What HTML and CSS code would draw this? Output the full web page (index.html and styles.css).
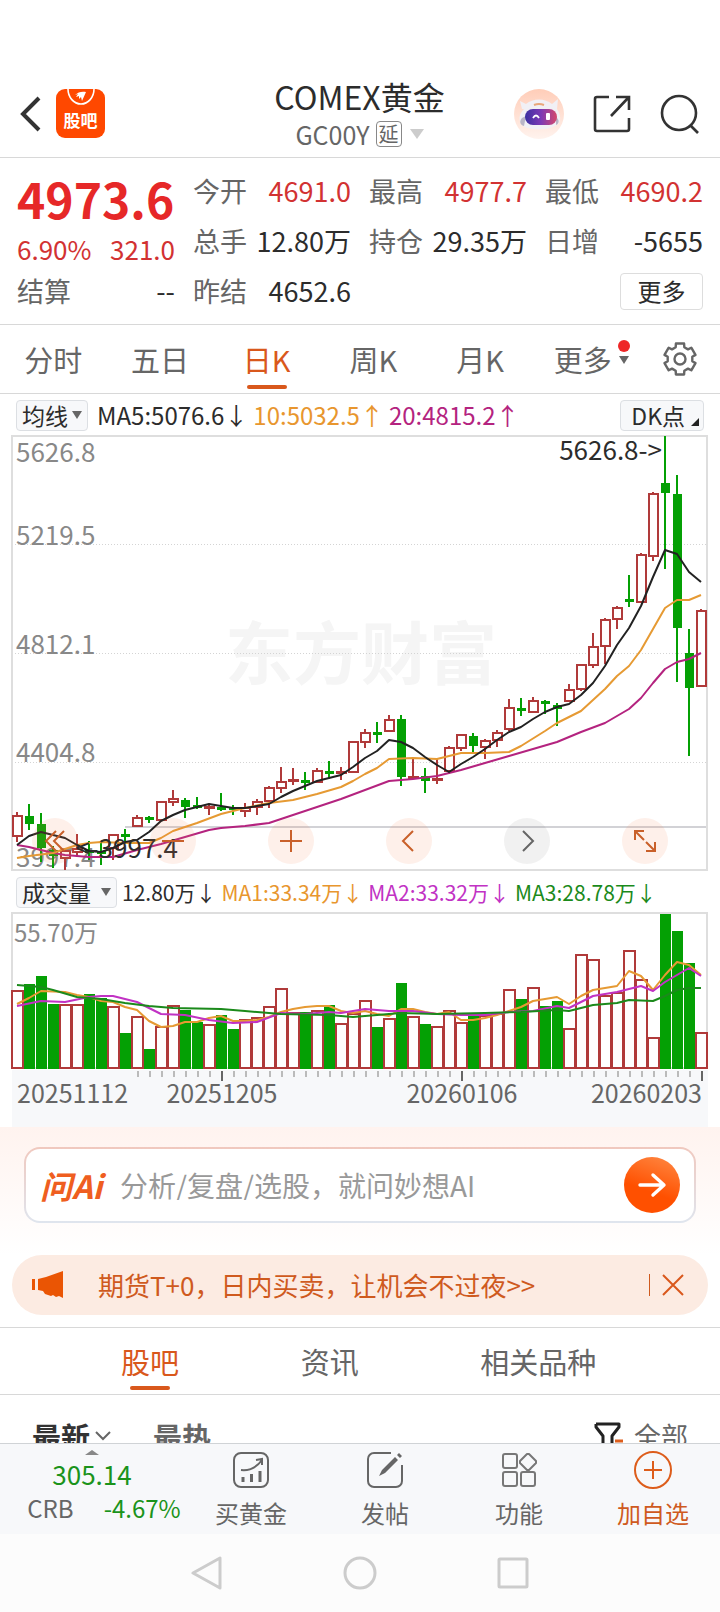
FILE: index.html
```html
<!DOCTYPE html>
<html lang="zh-CN">
<head>
    <meta charset="UTF-8" />
    <meta name="viewport" content="width=device-width, initial-scale=1" />
    <title>COMEX黄金</title>
    <link rel="stylesheet" href="styles.css">
</head>
<body>
<header class="header">
    <div class="header-left">
        <button class="icon-btn" aria-label="返回">
            <svg width="24" height="38" viewBox="0 0 24 38"><path d="M20 3 4 19l16 16" fill="none" stroke="#333" stroke-width="4"/></svg>
        </button>
        <a class="guba" href="#guba">
            <svg width="28" height="17" viewBox="0 0 28 17"><path d="M1 0a13 15 0 0 0 26 0" fill="none" stroke="#fff" stroke-width="1.6"/><path d="M8 6c3-3 7-4 11-3l-4 9-1-4-2 2 0-3-3 1 2-3z" fill="#fff"/></svg>
            <span>股吧</span>
        </a>
    </div>
    <div class="title">
        <h1>COMEX黄金</h1>
        <button class="code">GC00Y<span class="delay">延</span><i class="tri"></i></button>
    </div>
    <div class="header-right">
        <button class="icon-btn" aria-label="智能助手">
            <svg width="50" height="50" viewBox="0 0 50 50">
                <defs>
                    <linearGradient id="face" x1="0" x2="0" y1="0" y2="1"><stop offset="0" stop-color="#ffcdb8"/><stop offset="1" stop-color="#fff3ee"/></linearGradient>
                    <linearGradient id="visor"><stop offset="0" stop-color="#3b2fa0"/><stop offset=".5" stop-color="#7c3ab5"/><stop offset="1" stop-color="#d5486c"/></linearGradient>
                </defs>
                <circle cx="25" cy="25" r="25" fill="url(#face)"/>
                <path d="M8 20 6 12l6 3c7-6 19-6 26 0l6-5-1 10c4 6 4 12 1 15-8 7-29 7-36 1-4-5-3-11 2-16z" fill="#f1f0f5"/>
                <path d="M8 29c-3 3-2 7 2 8l2-10zM42 28c4 3 3 7 0 8z" fill="#b9b5c6"/>
                <rect x="11" y="20" width="32" height="16" rx="8" fill="url(#visor)"/>
                <path d="M19 29q3-5 6 0" fill="none" stroke="#fff" stroke-width="1.8"/>
                <rect x="32" y="24" width="4" height="7" rx="1" fill="#fff"/>
                <path d="M20 16q5-2 10 0" fill="none" stroke="#e9a77a" stroke-width="2"/>
            </svg>
        </button>
        <button class="icon-btn" aria-label="分享">
            <svg width="40" height="40" viewBox="0 0 40 40" fill="none" stroke="#333" stroke-width="2.6"><path d="M17 3H5a2 2 0 0 0-2 2v30a2 2 0 0 0 2 2h30a2 2 0 0 0 2-2V24M24 3h13v13M36 4 19 22"/></svg>
        </button>
        <button class="icon-btn" aria-label="搜索">
            <svg width="40" height="40" viewBox="0 0 40 40" fill="none" stroke="#333" stroke-width="2.6"><circle cx="19" cy="19" r="17"/><path d="m30 31 8 8"/></svg>
        </button>
    </div>
</header>

<section class="quote">
    <div class="last">4973.6</div>
    <div class="cell"><span>今开</span><b class="up">4691.0</b></div>
    <div class="cell"><span>最高</span><b class="up">4977.7</b></div>
    <div class="cell"><span>最低</span><b class="up">4690.2</b></div>
    <div class="cell change"><b class="up">6.90%</b><b class="up">321.0</b></div>
    <div class="cell"><span>总手</span><b>12.80万</b></div>
    <div class="cell"><span>持仓</span><b>29.35万</b></div>
    <div class="cell"><span>日增</span><b>-5655</b></div>
    <div class="cell"><span>结算</span><b>--</b></div>
    <div class="cell"><span>昨结</span><b>4652.6</b></div>
    <button class="more">更多</button>
</section>

<nav class="periods">
    <button>分时</button>
    <button>五日</button>
    <button class="active">日K</button>
    <button>周K</button>
    <button>月K</button>
    <button class="more-tab">更多<span class="mark"><i class="dot"></i><i class="tri"></i></span></button>
    <button aria-label="设置">
        <svg width="36" height="36" viewBox="0 0 36 36" fill="none" stroke="#666" stroke-width="2.4" stroke-linejoin="round"><path d="M13.7 6.3 13.9 2.5h8.2l.2 3.8L26 8.4l3.3-1.7 4.2 7.2-3.2 1.9v4.4l3.2 1.9-4.2 7.2-3.3-1.7-3.7 2.1-.2 3.8h-8.2l-.2-3.8L10 27.6l-3.3 1.7-4.2-7.2 3.2-1.9v-4.4l-3.2-1.9 4.2-7.2L10 8.4z"/><circle cx="18" cy="18" r="5.5"/></svg>
    </button>
</nav>

<section class="charts">
    <div class="legend">
        <button class="chip">均线<i class="tri"></i></button>
        <span>MA5:5076.6↓</span>
        <span class="c-orange">10:5032.5↑</span>
        <span class="c-magenta">20:4815.2↑</span>
        <button class="chip dk">DK点<i class="corner"></i></button>
    </div>
    <div class="kline">
        <svg id="kline" viewBox="12 436 696 435" role="img" aria-label="日K线"></svg>
        <div class="tools">
            <button aria-label="最左"><svg width="24" height="24" viewBox="0 0 24 24"><path d="M13 2 3 12l10 10M21 2 11 12l10 10"/></svg></button>
            <button aria-label="缩小"><svg width="24" height="24" viewBox="0 0 24 24"><path d="M1 12h22"/></svg></button>
            <button aria-label="放大"><svg width="24" height="24" viewBox="0 0 24 24"><path d="M1 12h22M12 1v22"/></svg></button>
            <button aria-label="左移"><svg width="24" height="24" viewBox="0 0 24 24"><path d="M16 2 6 12l10 10"/></svg></button>
            <button class="off" aria-label="右移"><svg width="24" height="24" viewBox="0 0 24 24"><path d="m8 2 10 10L8 22"/></svg></button>
            <button aria-label="全屏"><svg width="24" height="24" viewBox="0 0 24 24"><path d="M2 11V2h9M2 2l9 9M22 13v9h-9M22 22l-9-9"/></svg></button>
        </div>
    </div>
    <div class="legend volume-legend">
        <button class="chip">成交量<i class="tri"></i></button>
        <span>12.80万↓</span>
        <span class="c-orange">MA1:33.34万↓</span>
        <span class="c-purple">MA2:33.32万↓</span>
        <span class="c-green">MA3:28.78万↓</span>
    </div>
    <svg id="volume" viewBox="12 913 696 214" role="img" aria-label="成交量"></svg>
</section>

<section class="ask">
    <form class="ask-box" onsubmit="event.preventDefault();">
        <label class="ask-logo" for="question">问Ai</label>
        <input id="question" type="text" placeholder="分析/复盘/选股，就问妙想AI" />
        <button type="submit" aria-label="提问">
            <svg width="30" height="30" viewBox="0 0 30 30" fill="none" stroke="#fff" stroke-width="3.4" stroke-linecap="round" stroke-linejoin="round"><path d="M3 15h23M16 5l11 10-11 10"/></svg>
        </button>
    </form>
</section>

<div class="notice">
    <svg width="32" height="28" viewBox="0 0 32 28" fill="#ea5504"><path d="M0 8h3v11H0zM6 8l8-2L31 0v27l-4-2-3 1-3-2-2 1-3-1-3-1-2-3-5-1z"/></svg>
    <a href="#promo">期货T+0，日内买卖，让机会不过夜&gt;&gt;</a>
    <button aria-label="关闭"><svg width="22" height="22" viewBox="0 0 22 22" fill="none" stroke="#d9581c" stroke-width="2"><path d="m1 1 20 20M21 1 1 21"/></svg></button>
</div>

<nav class="sections">
    <button class="active">股吧</button>
    <button>资讯</button>
    <button>相关品种</button>
</nav>

<div class="sort">
    <button class="current">最新<svg width="16" height="10" viewBox="0 0 16 10" fill="none" stroke="#666" stroke-width="2"><path d="m1 1 7 7 7-7"/></svg></button>
    <button>最热</button>
    <button class="filter"><svg width="30" height="28" viewBox="0 0 30 28" fill="none" stroke="#222" stroke-width="3" stroke-linejoin="round"><path d="M2 2h23v3l-7 9v12M2 2v3l7 9v12"/><path d="M21 19h8" stroke="#dd5d1b"/></svg>全部</button>
</div>

<footer class="bottom">
    <a class="ticker" href="#crb">
        <i class="tri-up"></i>
        <strong>305.14</strong>
        <span><span>CRB</span><b>-4.67%</b></span>
    </a>
    <button>
        <svg width="36" height="36" viewBox="0 0 36 36" fill="none" stroke="#666" stroke-width="2"><rect x="1" y="1" width="34" height="34" rx="7"/><path d="M8 18c9 1 16-3 21-10M23 8l6-1v6" /><path d="M10 30v-5M18.500 30v-8M27 30V19" stroke-width="3"/></svg>
        买黄金
    </button>
    <button>
        <svg width="36" height="36" viewBox="0 0 36 36" fill="none" stroke="#666" stroke-width="2"><path d="M24 1H7a6 6 0 0 0-6 6v22a6 6 0 0 0 6 6h22a6 6 0 0 0 6-6V13"/><path d="m12 24 3-6L28 5l3 3-13 13zM30 3l2-2 3 3-2 2z" fill="#666" stroke="none"/></svg>
        发帖
    </button>
    <button>
        <svg width="36" height="36" viewBox="0 0 36 36" fill="none" stroke="#777" stroke-width="2"><rect x="2" y="2" width="14" height="14" rx="2"/><rect x="2" y="20" width="14" height="14" rx="2"/><rect x="20" y="20" width="14" height="14" rx="2"/><path d="m26 2 2 0 7 7 0 2-7 7-2 0-7-7 0-2z" stroke-linejoin="round"/></svg>
        功能
    </button>
    <button class="add">
        <svg width="38" height="38" viewBox="0 0 38 38" fill="none" stroke="#dd5d1b" stroke-width="2"><circle cx="19" cy="19" r="18"/><path d="M10 19h18M19 10v18"/></svg>
        加自选
    </button>
</footer>

<div class="system-nav">
    <button aria-label="返回"><svg width="32" height="36" viewBox="0 0 32 36"><path d="M29 3v30L2 18z"/></svg></button>
    <button aria-label="主页"><svg width="36" height="36" viewBox="0 0 36 36"><circle cx="18" cy="18" r="15"/></svg></button>
    <button aria-label="最近任务"><svg width="32" height="32" viewBox="0 0 32 32"><rect x="2" y="2" width="28" height="28" rx="1"/></svg></button>
</div>

<script src="chart.js"></script>
</body>
</html>
```

FILE: styles.css
```css
* {
    box-sizing: border-box;
}
body {
    margin: 0;
    padding-top: 70px;
    background-color: #fff;
    color: #2c2c2c;
    font-family: "Noto Sans CJK SC", "Noto Sans", sans-serif;
    font-size: 24px;
    line-height: 30px;
}
button, input {
    padding: 0;
    border: none;
    background: none;
    color: inherit;
    font: inherit;
}
button {
    cursor: pointer;
}
a {
    color: inherit;
    text-decoration: none;
}
svg {
    display: block;
}
i {
    font-style: normal;
}
b {
    font-weight: normal;
}
.tri {
    display: inline-block;
    border: 5px solid transparent;
    border-top: 8px solid #666;
    border-bottom: none;
}

/* header */
.header {
    display: grid;
    grid-template-columns: 1fr auto 1fr;
    align-items: center;
    height: 88px;
    padding: 0 20px 0 19px;
    border-bottom: 1px solid #d8d8d8;
}
.header-left, .header-right {
    display: flex;
    align-items: center;
}
.header-left {
    gap: 13px;
}
.header-right {
    justify-content: flex-end;
    gap: 28px;
}
.guba {
    display: flex;
    flex-direction: column;
    align-items: center;
    width: 49px;
    height: 49px;
    border-radius: 9px;
    background-color: #ff4800;
    color: #fff;
    font-size: 17px;
    font-weight: bold;
    line-height: 28px;
}
.title {
    text-align: center;
}
.title h1 {
    margin: 0;
    font-size: 32px;
    font-weight: normal;
    line-height: 40px;
}
.code {
    display: inline-flex;
    align-items: center;
    gap: 6px;
    height: 36px;
    color: #666;
    font-size: 25px;
}
.code .tri {
    border-width: 10px 7px 0;
    border-top-color: #ccc;
    margin-left: 2px;
}
.delay {
    width: 26px;
    height: 26px;
    border: 1px solid #888;
    border-radius: 4px;
    font-size: 20px;
    line-height: 24px;
}

/* quote */
.quote {
    display: grid;
    grid-template-columns: repeat(4, minmax(0, 1fr));
    grid-auto-rows: 50px;
    column-gap: 18px;
    padding: 8px 17px;
    border-bottom: 1px solid #d8d8d8;
    font-size: 27px;
}
.last {
    color: #e62828;
    font-size: 48px;
    font-weight: bold;
    line-height: 64px;
}
.cell {
    display: flex;
    align-items: center;
    justify-content: space-between;
    white-space: nowrap;
}
.cell span {
    color: #666;
}
.cell .up {
    color: #d23232;
}
.change {
    padding-top: 16px;
    font-size: 26px;
}
.more {
    grid-column: 4;
    justify-self: end;
    align-self: center;
    width: 83px;
    height: 37px;
    border: 1px solid #ddd;
    border-radius: 4px;
    font-size: 24px;
}

/* period tabs */
.periods {
    display: grid;
    grid-template-columns: repeat(6, 1fr) 80px;
    height: 69px;
    border-bottom: 1px solid #d8d8d8;
    color: #666;
    font-size: 29px;
}
.periods button {
    display: flex;
    align-items: center;
    justify-content: center;
}
.active {
    position: relative;
    color: #d9581c;
}
.active::after {
    content: "";
    position: absolute;
    bottom: 4px;
    left: 50%;
    width: 40px;
    height: 4px;
    margin-left: -20px;
    border-radius: 2px;
    background-color: #d9581c;
}
.periods .more-tab {
    gap: 6px;
    padding-left: 10px;
}
.mark {
    display: flex;
    flex-direction: column;
    align-items: center;
    gap: 4px;
    padding-bottom: 14px;
}
.dot {
    width: 12px;
    height: 12px;
    border-radius: 6px;
    background-color: #ee2727;
}

/* charts */
.charts {
    padding: 0 12px;
}
.charts svg {
    width: 100%;
    overflow: visible;
}
.legend {
    display: flex;
    align-items: center;
    gap: 5px;
    height: 42px;
    padding: 0 4px;
    white-space: nowrap;
}
.volume-legend {
    font-size: 21px;
}
.chip {
    display: flex;
    align-items: center;
    justify-content: center;
    gap: 4px;
    height: 31px;
    margin-right: 4px;
    padding: 0 5px;
    border: 1px solid #dcdfe3;
    border-radius: 4px;
    background-color: #f7f8fa;
    font-size: 23px;
}
.volume-legend .chip {
    gap: 10px;
    margin-right: 0;
}
.dk {
    position: relative;
    margin: 0 0 0 auto;
    padding: 0 18px 0 10px;
}
.corner {
    position: absolute;
    right: 4px;
    bottom: 4px;
    border-bottom: 8px solid #222;
    border-left: 8px solid transparent;
}
.c-orange {
    color: #e8962e;
}
.c-magenta {
    color: #b4237f;
}
.c-purple {
    color: #c132c4;
}
.c-green {
    color: #1b8a1b;
}
.kline {
    position: relative;
}
.tools {
    position: absolute;
    right: 40px;
    bottom: 7px;
    left: 20px;
    display: flex;
    justify-content: space-between;
}
.tools button {
    display: flex;
    align-items: center;
    justify-content: center;
    width: 46px;
    height: 46px;
    border-radius: 50%;
    background-color: rgba(250, 130, 80, 0.12);
}
.tools .off {
    background-color: rgba(120, 120, 120, 0.1);
}
.tools svg {
    width: 24px;
    fill: none;
    stroke: #c9602a;
    stroke-width: 2;
}
.tools .off svg {
    stroke: #666;
}

/* svg parts */
.frame {
    fill: none;
    stroke: #dedede;
    stroke-width: 2;
}
.grid-line {
    stroke: #d4d4d4;
    stroke-dasharray: 1 2;
}
.base-line {
    stroke: #d2d2d6;
    stroke-width: 2;
}
.watermark {
    fill: #f5f5f5;
    font-size: 68px;
    font-weight: bold;
}
.scale {
    fill: #888;
    font-size: 26px;
}
.volume-scale {
    fill: #888;
    font-size: 24px;
}
.peak {
    fill: #2c2c2c;
    font-size: 26px;
}
.axis {
    fill: #666;
    font-size: 25px;
}
.axis-bg {
    fill: #f7f8fa;
}
.tick {
    stroke: #bbb;
    stroke-width: 2;
}
.tick-major {
    stroke: #666;
    stroke-width: 2;
}
.rise {
    fill: #fff;
    stroke: #b03a3a;
    stroke-width: 2;
}
.fall {
    fill: #04a004;
    stroke: #04a004;
    stroke-width: 2;
}
.line {
    fill: none;
    stroke-width: 2;
    stroke-linejoin: round;
}
.black {
    stroke: #222;
}
.orange {
    stroke: #e69a33;
}
.magenta {
    stroke: #b4237f;
}
.purple {
    stroke: #c132c4;
}
.green {
    stroke: #1b8a1b;
}

/* ask */
.ask {
    padding: 20px 24px 32px;
    background: linear-gradient(#fff3ef, #fff);
}
.ask-box {
    display: flex;
    align-items: center;
    height: 76px;
    padding: 0 14px;
    border: 2px solid transparent;
    border-radius: 16px;
    background: linear-gradient(#fff, #fff) padding-box, linear-gradient(#f0c8be, #dfe5ee) border-box;
}
.ask-logo {
    width: 80px;
    color: #ef5e20;
    font-size: 32px;
    font-style: italic;
    font-weight: bold;
}
.ask-box input {
    flex: 1;
    min-width: 0;
    font-size: 28px;
    outline: none;
}
.ask-box input::placeholder {
    color: #999;
    opacity: 1;
}
.ask-box button {
    display: flex;
    align-items: center;
    justify-content: center;
    width: 56px;
    height: 56px;
    border-radius: 50%;
    background: linear-gradient(20deg, #ff5000 40%, #ff8a45);
}

/* notice */
.notice {
    display: flex;
    align-items: center;
    height: 60px;
    margin: 0 12px 12px;
    padding: 0 24px 0 20px;
    border-radius: 30px;
    background-color: #fcebe2;
    color: #cf5a1e;
    font-size: 26px;
}
.notice a {
    flex: 1;
    padding-left: 34px;
}
.notice button {
    padding-left: 12px;
    border-left: 1px solid #cf5a1e;
}

/* section tabs */
.sections {
    display: grid;
    grid-template-columns: repeat(3, 1fr);
    justify-items: start;
    height: 68px;
    padding: 0 60px 0 121px;
    border-top: 1px solid #d8d8d8;
    border-bottom: 1px solid #d8d8d8;
    color: #666;
    font-size: 29px;
}

/* sort row runs under the bottom bar */
.sort {
    display: flex;
    align-items: flex-start;
    gap: 42px;
    height: 48px;
    padding: 26px 32px 0;
    overflow: hidden;
    color: #666;
    font-size: 29px;
    font-weight: bold;
}
.sort button {
    display: flex;
    align-items: center;
    gap: 5px;
}
.sort .current {
    color: #333;
}
.sort .filter {
    gap: 10px;
    margin-left: auto;
    font-size: 27px;
    font-weight: normal;
}

/* bottom bar */
.bottom {
    display: grid;
    grid-template-columns: 184px repeat(4, 1fr);
    height: 91px;
    border-top: 1px solid #d0d3d6;
    background-color: #f7f8fa;
    color: #666;
}
.bottom button {
    display: flex;
    flex-direction: column;
    align-items: center;
    justify-content: space-between;
    padding: 8px 0 6px;
}
.bottom .add {
    padding-top: 7px;
    color: #cf5a1e;
}
.ticker {
    display: flex;
    flex-direction: column;
    align-items: center;
    padding-top: 6px;
}
.ticker strong {
    margin: 4px 0;
    color: #1b931b;
    font-size: 26px;
    font-weight: normal;
}
.ticker > span {
    display: flex;
    gap: 30px;
    padding-left: 24px;
}
.ticker b {
    color: #1b931b;
}
.tri-up {
    border: 7px solid transparent;
    border-top: none;
    border-bottom: 5px solid #888;
}

/* android keys */
.system-nav {
    display: flex;
    align-items: center;
    justify-content: center;
    gap: 119px;
    height: 78px;
    background-color: #fcfcfc;
}
.system-nav svg {
    fill: none;
    stroke: #ccc;
    stroke-width: 3;
    stroke-linejoin: round;
}
```

FILE: chart.js
```js
// first column x and distance between columns
const X0 = 17;
const STEP = 12;

// [direction, high, low, body top, body bottom]
const candles = [
    ['r', 812, 842, 816, 836], ['g', 804, 830, 817, 823], ['g', 813, 862, 825, 847], ['g', 846, 868, 851, 855],
    ['r', 848, 870, 851, 858], ['r', 834, 856, 849, 852], ['g', 841, 860, 851, 852], ['g', 843, 865, 852, 853],
    ['r', 834, 860, 835, 848], ['g', 829, 841, 835, 836], ['r', 815, 826, 818, 826], ['g', 816, 823, 818, 819],
    ['r', 801, 820, 802, 820], ['r', 790, 806, 799, 802], ['g', 798, 818, 801, 806], ['g', 797, 809, 806, 807],
    ['r', 804, 815, 807, 808], ['g', 793, 811, 808, 809], ['g', 805, 815, 808, 809], ['r', 803, 817, 808, 811],
    ['r', 799, 815, 802, 807], ['r', 786, 808, 788, 801], ['r', 767, 793, 782, 788], ['r', 768, 785, 780, 781],
    ['g', 772, 790, 781, 782], ['r', 768, 782, 771, 782], ['g', 761, 779, 772, 773], ['r', 767, 780, 772, 773],
    ['r', 741, 772, 742, 772], ['r', 729, 748, 733, 742], ['g', 722, 743, 733, 734], ['r', 715, 731, 720, 731],
    ['g', 715, 786, 720, 776], ['r', 758, 778, 777, 778], ['g', 768, 793, 777, 780], ['r', 758, 784, 779, 780],
    ['r', 746, 774, 748, 771], ['r', 734, 751, 735, 748], ['g', 733, 752, 737, 745], ['r', 739, 759, 741, 747],
    ['r', 730, 747, 733, 740], ['r', 699, 731, 708, 729], ['g', 698, 716, 709, 710], ['r', 697, 712, 701, 712],
    ['g', 700, 714, 702, 703], ['g', 703, 726, 706, 708], ['r', 684, 702, 690, 701], ['r', 664, 691, 665, 689],
    ['r', 633, 668, 647, 665], ['r', 618, 664, 620, 646], ['r', 606, 629, 608, 619], ['g', 575, 607, 600, 601],
    ['r', 553, 603, 555, 602], ['r', 492, 561, 494, 556], ['g', 436, 569, 484, 492], ['g', 475, 682, 495, 627],
    ['g', 629, 756, 654, 687], ['r', 609, 687, 611, 686]
];

const priceLines = {
    magenta: [[17, 845], [29, 847], [41, 850], [53, 853], [65, 855], [89, 857], [113, 857], [137, 850], [161, 844], [185, 837], [209, 830], [221, 828], [245, 826], [269, 823], [293, 815], [317, 807], [341, 799], [365, 790], [389, 781], [413, 779], [437, 776], [461, 770], [485, 763], [509, 756], [533, 749], [557, 742], [581, 732], [605, 723], [629, 709], [641, 698], [653, 683], [665, 669], [677, 662], [689, 659], [701, 653]],
    orange: [[17, 858], [29, 856], [53, 853], [77, 845], [89, 843], [101, 842], [125, 843], [149, 843], [161, 838], [173, 831], [197, 823], [221, 814], [233, 811], [245, 808], [269, 803], [293, 800], [317, 794], [341, 787], [353, 781], [365, 774], [377, 768], [389, 759], [413, 758], [437, 759], [449, 756], [461, 753], [485, 753], [509, 752], [521, 746], [545, 731], [557, 723], [569, 717], [581, 711], [593, 700], [605, 689], [617, 676], [629, 666], [641, 650], [653, 629], [665, 608], [677, 600], [689, 600], [701, 595]],
    black: [[17, 845], [29, 836], [41, 832], [53, 835], [65, 838], [77, 845], [89, 851], [101, 852], [113, 848], [125, 842], [137, 840], [149, 832], [161, 821], [173, 815], [185, 810], [197, 807], [209, 804], [221, 806], [233, 808], [245, 808], [257, 806], [269, 804], [281, 797], [293, 791], [305, 786], [317, 781], [329, 778], [341, 775], [353, 767], [365, 758], [377, 751], [389, 740], [401, 742], [413, 748], [425, 757], [437, 765], [449, 772], [461, 764], [473, 757], [485, 749], [497, 740], [509, 732], [521, 727], [533, 719], [545, 712], [557, 707], [569, 704], [581, 695], [593, 683], [605, 666], [617, 645], [629, 628], [641, 606], [653, 577], [665, 550], [677, 554], [689, 572], [701, 582]]
};

// [direction, bar top]
const volumes = [
    ['r', 991], ['g', 984], ['g', 976], ['g', 1004], ['r', 1005], ['r', 1005], ['g', 994], ['g', 998], ['r', 1007], ['g', 1033],
    ['r', 1017], ['g', 1049], ['r', 1027], ['r', 1006], ['g', 1010], ['g', 1022], ['r', 1025], ['g', 1015], ['g', 1029], ['r', 1020],
    ['r', 1018], ['r', 1007], ['r', 989], ['r', 1013], ['g', 1012], ['r', 1011], ['g', 1005], ['r', 1024], ['r', 1014], ['r', 1001],
    ['g', 1027], ['r', 1019], ['g', 983], ['r', 1017], ['g', 1024], ['r', 1027], ['r', 1011], ['r', 1023], ['g', 1014], ['r', 1016],
    ['r', 1014], ['r', 990], ['g', 999], ['r', 988], ['g', 1006], ['g', 1001], ['r', 1029], ['r', 955], ['r', 960], ['r', 996],
    ['r', 993], ['r', 951], ['r', 980], ['r', 1038], ['g', 914], ['g', 931], ['g', 963], ['r', 1033]
];

const volumeLines = {
    orange: [[17, 1004], [29, 998], [41, 991], [65, 992], [77, 995], [89, 997], [101, 1001], [113, 1002], [125, 1007], [137, 1010], [149, 1021], [161, 1027], [173, 1026], [185, 1022], [197, 1022], [209, 1018], [221, 1016], [233, 1021], [245, 1021], [257, 1020], [269, 1017], [281, 1012], [293, 1009], [305, 1007], [317, 1006], [329, 1006], [341, 1011], [353, 1013], [365, 1011], [377, 1014], [389, 1016], [401, 1009], [413, 1009], [425, 1012], [437, 1014], [449, 1012], [461, 1020], [473, 1020], [485, 1018], [497, 1015], [509, 1011], [521, 1007], [533, 1001], [545, 999], [557, 997], [569, 1004], [581, 996], [593, 990], [605, 988], [617, 986], [629, 971], [641, 976], [653, 990], [665, 975], [677, 962], [689, 965], [701, 975]],
    purple: [[17, 1006], [41, 1001], [65, 1002], [89, 997], [101, 996], [113, 996], [137, 1002], [161, 1014], [185, 1015], [209, 1020], [233, 1023], [257, 1022], [281, 1013], [305, 1014], [329, 1012], [341, 1013], [365, 1009], [389, 1011], [413, 1011], [437, 1014], [461, 1015], [485, 1015], [509, 1012], [533, 1011], [557, 1006], [569, 1008], [593, 996], [617, 992], [641, 986], [653, 991], [665, 982], [677, 975], [689, 968], [701, 976]],
    green: [[17, 985], [41, 987], [53, 990], [77, 997], [101, 999], [125, 1003], [149, 1006], [173, 1008], [221, 1009], [245, 1011], [281, 1014], [329, 1015], [353, 1017], [377, 1015], [401, 1013], [437, 1014], [485, 1013], [521, 1012], [557, 1010], [569, 1011], [593, 1005], [617, 1003], [629, 1000], [653, 1001], [665, 996], [677, 990], [689, 988], [701, 988]]
};

function add(svg, tag, className, attrs, text) {
    const el = document.createElementNS('http://www.w3.org/2000/svg', tag);
    el.setAttribute('class', className);
    for (const key in attrs) {
        el.setAttribute(key, attrs[key]);
    }
    if (text) {
        el.textContent = text;
    }
    svg.appendChild(el);
}

function addLines(svg, lines) {
    for (const name in lines) {
        add(svg, 'polyline', 'line ' + name, { points: lines[name].join(' ') });
    }
}

function drawKline() {
    const svg = document.getElementById('kline');
    add(svg, 'text', 'watermark', { x: 361, y: 679, 'text-anchor': 'middle' }, '东方财富');
    [544, 653, 762].forEach(y => add(svg, 'line', 'grid-line', { x1: 12, x2: 707, y1: y + 0.5, y2: y + 0.5 }));
    add(svg, 'line', 'base-line', { x1: 125, x2: 707, y1: 827, y2: 827 });
    add(svg, 'rect', 'frame', { x: 12, y: 436, width: 695, height: 434 });

    [['5626.8', 462], ['5219.5', 545], ['4812.1', 654], ['4404.8', 762], ['3997.4', 867]].forEach(s => {
        add(svg, 'text', 'scale', { x: 16, y: s[1] }, s[0]);
    });

    candles.forEach((c, i) => {
        const [dir, high, low, top, bottom] = c;
        const x = X0 + i * STEP;
        const rise = dir === 'r';
        const cls = rise ? 'rise' : 'fall';
        add(svg, 'line', cls, { x1: x, x2: x, y1: high, y2: low });
        add(svg, 'rect', cls, { x: rise ? x - 4 : x - 3, y: top, width: rise ? 9 : 7, height: bottom - top });
    });
    addLines(svg, priceLines);
    add(svg, 'text', 'peak', { x: 662, y: 460, 'text-anchor': 'end' }, '5626.8->');
    add(svg, 'text', 'peak', { x: 178, y: 858, 'text-anchor': 'end' }, '<-3997.4');
}

function drawVolume() {
    const svg = document.getElementById('volume');
    const base = 1069;
    add(svg, 'rect', 'axis-bg', { x: 12, y: 1070, width: 696, height: 57 });
    add(svg, 'rect', 'frame', { x: 12, y: 913, width: 695, height: 155 });
    add(svg, 'text', 'volume-scale', { x: 14, y: 942 }, '55.70万');

    volumes.forEach((v, i) => {
        const x = X0 + i * STEP;
        if (v[0] === 'r') {
            add(svg, 'rect', 'rise', { x: x - 5, y: v[1], width: 11, height: base - 1 - v[1] });
        } else {
            add(svg, 'rect', 'fall', { x: x - 4, y: v[1] + 1, width: 9, height: base - 2 - v[1] });
        }
    });
    addLines(svg, volumeLines);

    for (let i = 10; i < volumes.length; i++) {
        const major = i === 17 || i === 37 || i === 57;
        const x = X0 + i * STEP + 1;
        add(svg, 'line', major ? 'tick-major' : 'tick', { x1: x, x2: x, y1: 1071, y2: major ? 1081 : 1077 });
    }
    [['20251112', 17, 'start'], ['20251205', 222, 'middle'], ['20260106', 462, 'middle'], ['20260203', 702, 'end']].forEach(d => {
        add(svg, 'text', 'axis', { x: d[1], y: 1103, 'text-anchor': d[2] }, d[0]);
    });
}

drawKline();
drawVolume();
```
